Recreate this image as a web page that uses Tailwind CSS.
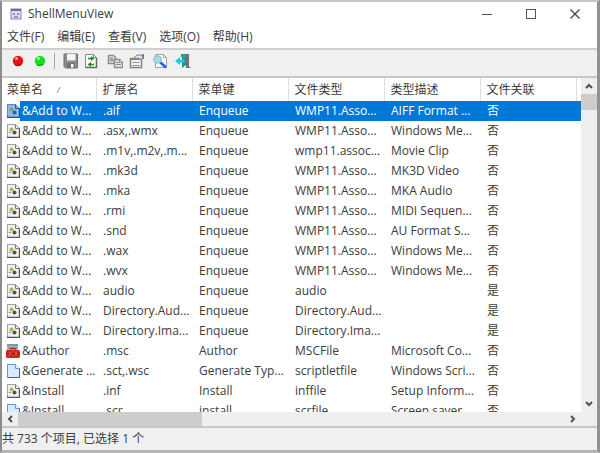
<!DOCTYPE html>
<html lang="zh-CN">
<head>
    <meta charset="UTF-8">
    <meta name="viewport" content="width=device-width, initial-scale=1.0">
    <title>ShellMenuView</title>
    <script src="https://cdn.jsdelivr.net/npm/@tailwindcss/browser@4"></script>
</head>
<body class="flex h-screen flex-col overflow-hidden border-t-2 border-r-3 border-b-3 border-l-2 border-t-[#c8c8c8] border-r-[#929292] border-b-[#b4b4b4] border-l-[#8c8c8c] bg-white font-['Open_Sans','Noto_Sans_CJK_SC',sans-serif] text-[12px] text-[#3c3c3c] select-none">

    <!-- Title bar -->
    <header class="flex h-6 shrink-0 items-center pl-2">
        <svg class="mr-1.5 size-3" viewBox="0 0 12 12">
            <rect x="1" y="1" width="10" height="10" fill="#dcdcf4" stroke="#85859f"/>
            <path d="M1 2h10" stroke="#70708c" stroke-width="2"/>
            <path d="M4 5v2M8 5v2M4 9h4" stroke="#5050b4"/>
        </svg>
        <h1 class="flex-1">ShellMenuView</h1>
        <button class="flex h-6 w-11 items-center justify-center" aria-label="最小化">
            <svg class="size-3" viewBox="0 0 12 12" fill="none" stroke="#555"><path d="M1 6.500h10"/></svg>
        </button>
        <button class="flex h-6 w-11 items-center justify-center" aria-label="最大化">
            <svg class="size-3" viewBox="0 0 12 12" fill="none" stroke="#555"><rect x="1.500" y="1.500" width="9" height="9"/></svg>
        </button>
        <button class="flex h-6 w-11 items-center justify-center" aria-label="关闭">
            <svg class="size-3" viewBox="0 0 12 12" fill="none" stroke="#444" stroke-width="1.300"><path d="M1.500 1.500l9 9M10.500 1.500l-9 9"/></svg>
        </button>
    </header>

    <!-- Menu -->
    <nav class="flex h-6 shrink-0 items-center gap-[13px] border-b-2 border-[#cfcfcf] pl-[5px]">
        <button>文件(F)</button>
        <button>编辑(E)</button>
        <button>查看(V)</button>
        <button>选项(O)</button>
        <button>帮助(H)</button>
    </nav>

    <!-- Toolbar -->
    <div class="flex h-7 shrink-0 items-center border-b-2 border-[#c8c8c8] bg-[#f0f0f0] pb-1 pl-2" role="toolbar">
        <button class="mr-1.5 size-4" aria-label="禁用">
            <svg viewBox="0 0 16 16"><circle cx="8" cy="8" r="5.200" fill="#ee1111"/><circle cx="6.500" cy="5.500" r="1.500" fill="#ffa0a0"/><path d="M5 12q3 1.500 6-1" fill="none" stroke="#8c1414"/></svg>
        </button>
        <button class="mr-1.5 size-4" aria-label="启用">
            <svg viewBox="0 0 16 16"><circle cx="8" cy="8" r="5.200" fill="#18e018"/><circle cx="6.500" cy="5.500" r="1.500" fill="#a8ffa8"/><path d="M5 12q3 1.500 6-1" fill="none" stroke="#148c14"/></svg>
        </button>
        <span class="mr-2 h-4 w-px bg-[#a8a8a8]"></span>
        <button class="mr-1 size-4" aria-label="保存">
            <svg viewBox="0 0 16 16"><path d="M1 1h13.500v14H2.500L1 13.500z" fill="#8c8c8c" stroke="#707070"/><path d="M4 1h8.500v6.500H4z" fill="#f4f4f4"/><path d="M4 10h8v5H4z" fill="#707070"/><path d="M8 11h2.500v3.500H8z" fill="#fff"/></svg>
        </button>
        <button class="mr-2 size-4" aria-label="刷新">
            <svg viewBox="0 0 16 16"><path d="M2.500 1.500h8l3 3v10h-11z" fill="#f8f8f8" stroke="#8c8c8c"/><path d="M13.500 5v9.500h-11" fill="none" stroke="#686868" stroke-width="1.500"/><path d="M10.500 1.500v3h3" fill="none" stroke="#8c8c8c"/><path d="M5 5.500h4M7 11.500h4" stroke="#149614" stroke-width="1.500"/><path d="M8 3l3.500 2.500L8 8zM8 9v5l-3.500-2.500z" fill="#149614"/></svg>
        </button>
        <button class="mr-1.5 size-4" aria-label="复制">
            <svg viewBox="0 0 16 16" stroke="#8c8c8c" fill="#e4e4e4"><path d="M1.500 2.500h5l2 2v6h-7z" stroke-width="1.500"/><path d="M3 5.500h3M3 7.500h4" stroke-width="1.500"/><path d="M7.500 6.500h5l3 3v5h-8z" stroke-width="1.500"/><path d="M9 9.500h3M9 11.500h5M12.500 6.500v3h3"/></svg>
        </button>
        <button class="mr-2 size-4" aria-label="属性">
            <svg viewBox="0 0 16 16" fill="none"><path d="M1.500 5.500h11v9h-11z" fill="#f4f4f4" stroke="#848484" stroke-width="1.500"/><path d="M1 6h12" stroke="#848484" stroke-width="2"/><path d="M3.500 9.500h7M3.500 12.500h7" stroke="#949494"/><path d="M5 5l3-3h4l2 2-2 3-3-2" fill="#dedede" stroke="#848484"/><path d="M13 1h2v5h-2z" fill="#6c7cc8"/></svg>
        </button>
        <button class="mr-1.5 size-4" aria-label="查找">
            <svg viewBox="0 0 16 16" fill="none"><path d="M2.500 1.500h8l3 3v10h-11z" fill="#fafafa" stroke="#a4a4a4"/><path d="M10.500 1.500v3h3" stroke="#a4a4a4"/><circle cx="4.500" cy="6.500" r="3.800" fill="#a8dcec" stroke="#8fb3c5"/><path d="M7.500 9.500l5.500 5" stroke="#1968e8" stroke-width="2.800"/></svg>
        </button>
        <button class="size-4" aria-label="退出">
            <svg viewBox="0 0 16 16"><path d="M6 1h8v13h1.500v1H11V8H8V4H6z" fill="#727272"/><path d="M7 2l4-1v11l-4 3z" fill="#1c9494"/><path d="M0 8l5-4v2.500h4.500v3H5V12z" fill="#16cfdc"/><circle cx="9" cy="3" r="1.500" fill="#16b4be"/></svg>
        </button>
    </div>

    <!-- List -->
    <main class="flex min-h-0 flex-1">
        <div class="min-w-0 flex-1 overflow-hidden">
            <table class="w-full table-fixed border-collapse text-left leading-5 whitespace-nowrap">
                <colgroup>
                    <col class="w-[18px]">
                    <col class="w-[76px]">
                    <col class="w-24">
                    <col class="w-24">
                    <col class="w-24">
                    <col class="w-24">
                    <col class="w-24">
                    <col>
                </colgroup>
                <thead>
                    <tr class="h-[23px]">
                        <th colspan="2" class="border-r border-[#dedede] p-0 pl-[5px] font-normal">菜单名<svg class="ml-3 inline size-2" viewBox="0 0 8 8"><path d="M2 7l3-6" stroke="#8c8c8c"/></svg></th>
                        <th class="border-r border-[#dedede] p-0 pl-1.5 font-normal">扩展名</th>
                        <th class="border-r border-[#dedede] p-0 pl-1.5 font-normal">菜单键</th>
                        <th class="border-r border-[#dedede] p-0 pl-1.5 font-normal">文件类型</th>
                        <th class="border-r border-[#dedede] p-0 pl-1.5 font-normal">类型描述</th>
                        <th class="border-r border-[#dedede] p-0 pl-1.5 font-normal">文件关联</th>
                        <th class="p-0"></th>
                    </tr>
                </thead>
                <tbody id="items"></tbody>
            </table>
        </div>
        <!-- Vertical scrollbar -->
        <div class="flex w-4 shrink-0 flex-col bg-[#efefef]">
            <button class="flex h-4 items-center justify-center" aria-label="向上滚动">
                <svg class="size-2" viewBox="0 0 8 8" fill="none" stroke="#505050" stroke-width="2"><path d="M1 6l3-3 3 3"/></svg>
            </button>
            <div class="h-4 bg-[#cdcdcd]"></div>
            <button class="mt-auto flex h-4 items-center justify-center" aria-label="向下滚动">
                <svg class="size-2" viewBox="0 0 8 8" fill="none" stroke="#505050" stroke-width="2"><path d="M1 2l3 3 3-3"/></svg>
            </button>
        </div>
    </main>

    <!-- Horizontal scrollbar -->
    <div class="flex h-[14px] shrink-0 bg-[#efefef] pr-4">
        <button class="flex w-4 items-center justify-center" aria-label="向左滚动">
            <svg class="size-2" viewBox="0 0 8 8" fill="none" stroke="#505050" stroke-width="2"><path d="M6 1L3 4l3 3"/></svg>
        </button>
        <div class="w-[184px] bg-[#cdcdcd]"></div>
        <button class="ml-auto flex w-4 items-center justify-center" aria-label="向右滚动">
            <svg class="size-2" viewBox="0 0 8 8" fill="none" stroke="#505050" stroke-width="2"><path d="M2 1l3 3-3 3"/></svg>
        </button>
    </div>

    <footer class="flex h-6 shrink-0 items-center border-t-2 border-[#c8c8c8] bg-[#f0f0f0]">共 733 个项目, 已选择 1 个</footer>

    <script>
        // Row icons
        const icons = {
            script: '<svg class="ml-1 size-[14px]" viewBox="0 0 14 14"><path d="M1.500.5h8l4 4v9h-12z" fill="#f0f0f0" stroke="#a0a0a0"/><path d="M1 13.500h12.500V4.500" fill="none" stroke="#555" stroke-width="1.300"/><path d="M9.500.5v4h4" fill="none" stroke="#777"/><circle cx="5.500" cy="5.500" r="2" fill="#b8b43c"/><circle cx="8.500" cy="8.500" r="2" fill="#505050"/><path d="M3 8.500h2" stroke="#888"/></svg>',
            selected: '<svg class="ml-1 size-[14px]" viewBox="0 0 14 14"><path d="M1.500.5h8l4 4v9h-12z" fill="#8fb8e8" stroke="#5484bc"/><path d="M1 13.500h12.500V4.500" fill="none" stroke="#244f92" stroke-width="1.300"/><path d="M9.500.5v4h4" fill="none" stroke="#245a9c"/><circle cx="5.500" cy="5.500" r="2" fill="#7c9c74"/><circle cx="8.500" cy="8.500" r="2" fill="#2c5ca8"/></svg>',
            author: '<svg class="ml-1 size-[14px]" viewBox="0 0 14 14"><path d="M1 0h11v7H1z" fill="#a8b0b4"/><path d="M1 1h11M2 4h9" stroke="#727c82"/><rect y="6" width="14" height="8" rx="1.500" fill="#d42828"/><path d="M5 6V4.500h4V6" fill="none" stroke="#8c2020"/><path d="M0 9.500h14" stroke="#a01414"/><path d="M4 8.500v2M10 8.500v2" stroke="#eea0a0"/></svg>',
            page: '<svg class="ml-1 size-[14px]" viewBox="0 0 14 14"><path d="M1.500.5h8l4 4v9h-12z" fill="#d8eaff" stroke="#6c94cc"/><path d="M9.500.5v4h4" fill="#fff" stroke="#6c94cc"/><path d="M1.500 13.500h12v-9" fill="none" stroke="#3e68aa"/></svg>'
        }

        // icon, name, extension, key, type, description, association
        const rows = [
            ['selected', '&Add to W...', '.aif', 'Enqueue', 'WMP11.Asso...', 'AIFF Format ...', '否'],
            ['script', '&Add to W...', '.asx,.wmx', 'Enqueue', 'WMP11.Asso...', 'Windows Me...', '否'],
            ['script', '&Add to W...', '.m1v,.m2v,.m...', 'Enqueue', 'wmp11.assoc...', 'Movie Clip', '否'],
            ['script', '&Add to W...', '.mk3d', 'Enqueue', 'WMP11.Asso...', 'MK3D Video', '否'],
            ['script', '&Add to W...', '.mka', 'Enqueue', 'WMP11.Asso...', 'MKA Audio', '否'],
            ['script', '&Add to W...', '.rmi', 'Enqueue', 'WMP11.Asso...', 'MIDI Sequen...', '否'],
            ['script', '&Add to W...', '.snd', 'Enqueue', 'WMP11.Asso...', 'AU Format S...', '否'],
            ['script', '&Add to W...', '.wax', 'Enqueue', 'WMP11.Asso...', 'Windows Me...', '否'],
            ['script', '&Add to W...', '.wvx', 'Enqueue', 'WMP11.Asso...', 'Windows Me...', '否'],
            ['script', '&Add to W...', 'audio', 'Enqueue', 'audio', '', '是'],
            ['script', '&Add to W...', 'Directory.Aud...', 'Enqueue', 'Directory.Aud...', '', '是'],
            ['script', '&Add to W...', 'Directory.Ima...', 'Enqueue', 'Directory.Ima...', '', '是'],
            ['author', '&Author', '.msc', 'Author', 'MSCFile', 'Microsoft Co...', '否'],
            ['page', '&Generate ...', '.sct,.wsc', 'Generate Typ...', 'scriptletfile', 'Windows Scri...', '否'],
            ['script', '&Install', '.inf', 'Install', 'inffile', 'Setup Inform...', '否'],
            ['page', '&Install', '.scr', 'install', 'scrfile', 'Screen saver', '否'],
        ]

        const tbody = document.getElementById('items')
        for (const [icon, ...cells] of rows) {
            const tr = tbody.insertRow()
            tr.className = 'h-5'
            const iconCell = tr.insertCell()
            iconCell.className = 'p-0'
            iconCell.innerHTML = icons[icon]
            cells.push('')
            cells.forEach((text, i) => {
                const td = tr.insertCell()
                td.className = i == 0 ? 'p-0 pl-0.5' : 'p-0 pl-[7px]'
                if (icon == 'selected') {
                    td.className += ' bg-[#0078d7] text-white'
                }
                td.textContent = text
            })
        }
    </script>
</body>
</html>
